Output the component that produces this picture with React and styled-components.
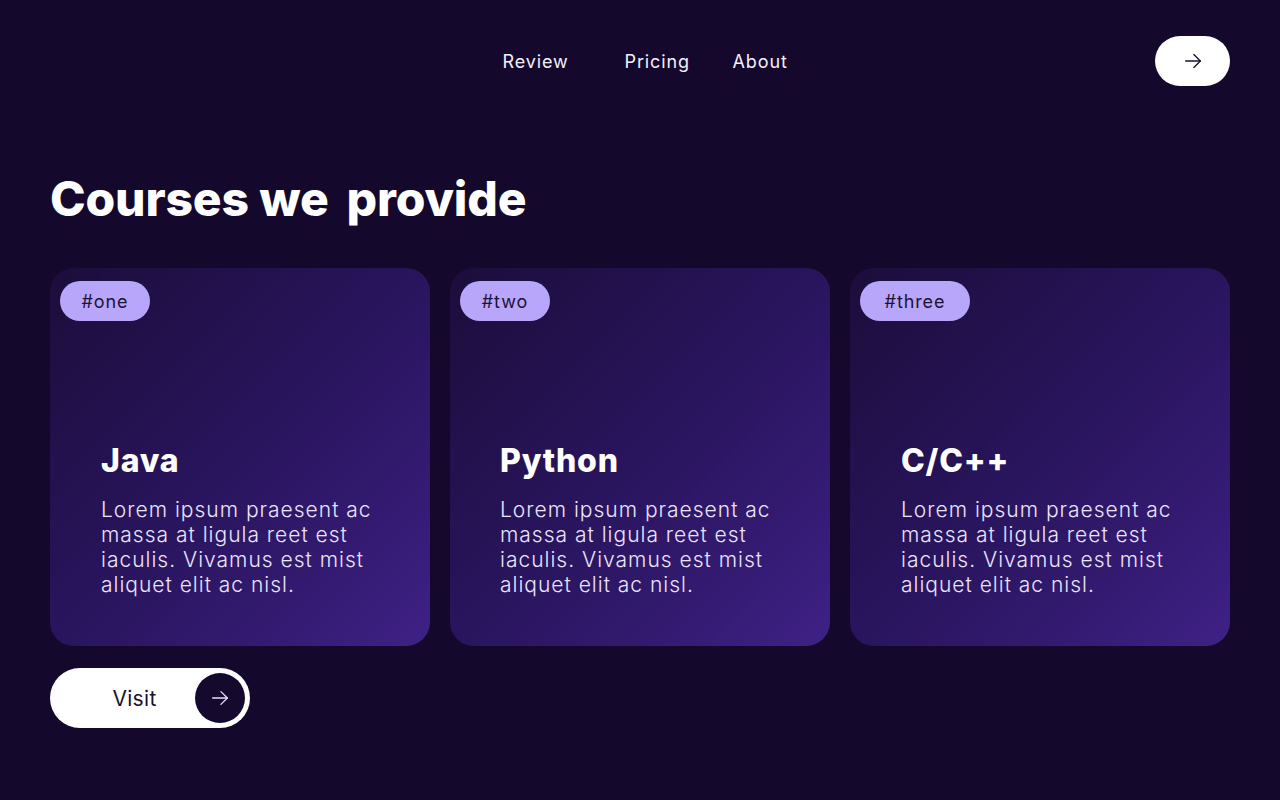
import React from "react";
import styled, { createGlobalStyle } from "styled-components";

const Global = createGlobalStyle`
  html, body { margin: 0; padding: 0; background: #14082c; }
  body { font-family: Inter, "Noto Sans", sans-serif; color: #fff; }
  * { box-sizing: border-box; }
`;

const Page = styled.div`
  width: 1280px;
  min-height: 800px;
  background: #14082c;
  padding: 36px 50px 0;
`;

const Header = styled.header`
  display: grid;
  grid-template-columns: 1fr auto 1fr;
  align-items: center;
  height: 50px;
`;

const Nav = styled.nav`
  grid-column: 2;
  display: flex;
  align-items: center;
  padding-left: 11px;
`;

const NavLink = styled.a`
  width: ${(p) => p.$w}px;
  font-size: 18px;
  color: #f4f0fb;
  text-decoration: none;
  letter-spacing: 0.9px;
`;

const ArrowButton = styled.button`
  grid-column: 3;
  justify-self: end;
  width: 75px;
  height: 50px;
  border-radius: 25px;
  border: none;
  background: #fff;
  display: flex;
  align-items: center;
  justify-content: center;
  color: #1b1030;
  cursor: pointer;
`;

const Heading = styled.h1`
  margin: 84px 0 0;
  font-size: 48px;
  font-weight: 800;
  line-height: 58px;
  letter-spacing: -0.15px;
  display: flex;
  gap: 18px;
`;

const Cards = styled.div`
  display: grid;
  grid-template-columns: repeat(3, 380px);
  gap: 20px;
  margin-top: 40px;
`;

const Card = styled.article`
  height: 378px;
  border-radius: 24px;
  background: linear-gradient(135deg, #1c0d3b 0%, #27145a 45%, #331a70 75%, #3f2186 100%);
  padding: 13px 10px;
  display: flex;
  flex-direction: column;
  align-items: flex-start;
`;

const Tag = styled.span`
  height: 40px;
  padding: 0 20px;
  border-radius: 20px;
  background: #b8a6fa;
  color: #1d1238;
  font-size: 18px;
  letter-spacing: 0.9px;
  display: inline-flex;
  align-items: center;
  min-width: ${(p) => p.$min}px;
  justify-content: center;
`;

const Body = styled.div`
  margin-top: 120px;
  padding-left: ${(p) => p.$indent}px;
`;

const Title = styled.h2`
  margin: 0;
  font-size: 32px;
  font-weight: 800;
  line-height: 40px;
  color: #fff;
  letter-spacing: 0.8px;
`;

const Text = styled.p`
  margin: 16px 0 0;
  font-size: 21px;
  font-weight: 300;
  line-height: 25px;
  color: #ece4fd;
  letter-spacing: 1px;
`;

const VisitButton = styled.button`
  margin-top: 22px;
  width: 200px;
  height: 60px;
  border-radius: 30px;
  border: none;
  background: #fff;
  display: flex;
  align-items: center;
  padding: 0 5px 0 0;
  font-family: Inter, sans-serif;
  cursor: pointer;
`;

const VisitLabel = styled.span`
  flex: 1;
  text-align: center;
  padding-left: 24px;
  font-size: 21px;
  letter-spacing: 0.3px;
  color: #1a1130;
`;

const Circle = styled.span`
  width: 50px;
  height: 50px;
  border-radius: 50%;
  background: #150a2d;
  display: flex;
  align-items: center;
  justify-content: center;
  color: #e9dff8;
`;

const Arrow = ({ size = 20, stroke = 1.6 }) => (
  <svg width={size} height={size} viewBox="0 0 24 24" fill="none" stroke="currentColor" strokeWidth={stroke} strokeLinecap="round" strokeLinejoin="round">
    <path d="M4 12h16" />
    <path d="M13 5l7 7-7 7" />
  </svg>
);

const courses = [
  { tag: "#one", title: "Java", indent: 41, min: 90 },
  { tag: "#two", title: "Python", indent: 40, min: 90 },
  { tag: "#three", title: "C/C++", indent: 41, min: 110 },
];

export default function App() {
  return (
    <>
      <Global />
      <Page>
        <Header>
          <Nav>
            <NavLink href="#" $w={122}>Review</NavLink>
            <NavLink href="#" $w={108}>Pricing</NavLink>
            <NavLink href="#" $w={56}>About</NavLink>
          </Nav>
          <ArrowButton aria-label="Next">
            <Arrow size={22} stroke={1.5} />
          </ArrowButton>
        </Header>
        <Heading>
          <span>Courses we</span>
          <span>provide</span>
        </Heading>
        <Cards>
          {courses.map((c) => (
            <Card key={c.tag}>
              <Tag $min={c.min}>{c.tag}</Tag>
              <Body $indent={c.indent}>
                <Title>{c.title}</Title>
                <Text>
                  Lorem ipsum praesent ac
                  <br />
                  massa at ligula reet est
                  <br />
                  iaculis. Vivamus est mist
                  <br />
                  aliquet elit ac nisl.
                </Text>
              </Body>
            </Card>
          ))}
        </Cards>
        <VisitButton>
          <VisitLabel>Visit</VisitLabel>
          <Circle>
            <Arrow size={22} stroke={1.4} />
          </Circle>
        </VisitButton>
      </Page>
    </>
  );
}
